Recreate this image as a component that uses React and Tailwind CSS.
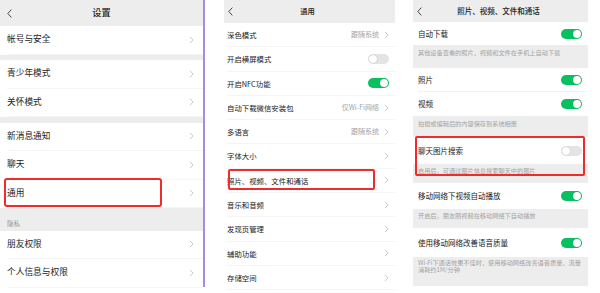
import React from 'react'
import clsx from 'clsx'

function Chevron() {
    return (
        <svg width="5" height="8" viewBox="0 0 5 8" className="shrink-0">
            <path d="M1 0.8L4 4L1 7.2" fill="none" stroke="#c4c4c4" strokeWidth="0.9" />
        </svg>
    )
}

function Back({ size = 1 }) {
    return (
        <svg width={5 * size} height={9 * size} viewBox="0 0 5 9" className="shrink-0">
            <path d="M4.3 0.6L0.8 4.5L4.3 8.4" fill="none" stroke="#333" strokeWidth="0.9" />
        </svg>
    )
}

function Toggle({ on }) {
    return (
        <div className={clsx(
            'w-[21px] h-[10px] rounded-full flex items-center px-[1px] shrink-0',
            on ? 'bg-[#07c160] justify-end' : 'bg-[#e4e4e4] justify-start'
        )}>
            <div className="w-[8px] h-[8px] rounded-full bg-white shadow-[0_0_1px_rgba(0,0,0,0.35)]" />
        </div>
    )
}

// ---------- panel 1: 设置 ----------
function SettingRow({ label, children }) {
    return (
        <div className="relative h-[28.5px] bg-white pl-[7px] flex">
            <div className="flex-1 flex items-center justify-between pr-[9px] border-b border-[#f4f4f4]">
                <span className="text-[8.7px] leading-none text-[#222]">{label}</span>
                <Chevron />
            </div>
            {children}
        </div>
    )
}

function Gap() {
    return <div className="h-[5.5px] bg-[#ededed]" />
}

function SettingsPanel() {
    return (
        <div className="w-[203px] h-full flex flex-col bg-white">
            <div className="h-[26px] bg-[#ededed] flex items-center px-[7px]">
                <Back />
                <span className="flex-1 text-center text-[9.2px] leading-none font-medium text-[#222]">设置</span>
                <span className="w-[5px]" />
            </div>
            <SettingRow label="帐号与安全" />
            <Gap />
            <SettingRow label="青少年模式" />
            <SettingRow label="关怀模式" />
            <Gap />
            <SettingRow label="新消息通知" />
            <SettingRow label="聊天" />
            <SettingRow label="通用">
                <div className="absolute left-[4px] top-[-1.5px] w-[158px] h-[29px] border-2 border-[#ef2b2b] rounded-[3px]" />
            </SettingRow>
            <div className="h-[22.5px] bg-[#ededed] flex items-end pl-[7px] pb-[4px]">
                <span className="text-[6.5px] leading-none text-[#9a9a9a]">隐私</span>
            </div>
            <SettingRow label="朋友权限" />
            <SettingRow label="个人信息与权限" />
        </div>
    )
}

// ---------- panel 2: 通用 ----------
function GeneralRow({ label, value, toggle, boxed }) {
    return (
        <div className="relative h-[24.3px] bg-white pl-[3px] flex">
            <div className="flex-1 flex items-center justify-between pr-[6px] border-b border-[#f4f4f4]">
                <span className="text-[7.4px] leading-none text-[#222]">{label}</span>
                {toggle === undefined ? (
                    <div className="flex items-center gap-[5px]">
                        {value && <span className="text-[7px] leading-none text-[#a3a3a3]">{value}</span>}
                        <Chevron />
                    </div>
                ) : (
                    <Toggle on={toggle} />
                )}
            </div>
            {boxed && (
                <div className="absolute left-[4px] top-0 w-[147px] h-[21.5px] border-2 border-[#ef2b2b] rounded-[2px]" />
            )}
        </div>
    )
}

function GeneralPanel() {
    return (
        <div className="w-[171px] h-full flex flex-col bg-white">
            <div className="h-[23px] bg-[#ededed] flex items-center px-[4px]">
                <Back />
                <span className="flex-1 text-center text-[7.3px] leading-none font-medium text-[#222] pr-[4px]">通用</span>
                <span className="w-[5px]" />
            </div>
            <GeneralRow label="深色模式" value="跟随系统" />
            <GeneralRow label="开启横屏模式" toggle={false} />
            <GeneralRow label="开启NFC功能" toggle={true} />
            <GeneralRow label="自动下载微信安装包" value="仅Wi-Fi网络" />
            <GeneralRow label="多语言" value="跟随系统" />
            <GeneralRow label="字体大小" />
            <GeneralRow label="照片、视频、文件和通话" boxed />
            <GeneralRow label="音乐和音频" />
            <GeneralRow label="发现页管理" />
            <GeneralRow label="辅助功能" />
            <GeneralRow label="存储空间" />
        </div>
    )
}

// ---------- panel 3: 照片、视频、文件和通话 ----------
function SwitchRow({ label, on, h, line }) {
    return (
        <div className={clsx('bg-white pl-[5px] flex', h)}>
            <div className={clsx('flex-1 flex items-center justify-between pr-[6px]', line && 'border-b border-[#f2f2f2]')}>
                <span className="text-[7.5px] leading-none text-[#222]">{label}</span>
                <Toggle on={on} />
            </div>
        </div>
    )
}

function Note({ h, pt = 'pt-[3.5px]', children }) {
    return (
        <div className={clsx('bg-[#ededed] px-[5px]', h, pt)}>
            <p className="text-[6.2px] leading-[7px] text-[#a3a3a3]">{children}</p>
        </div>
    )
}

function MediaPanel() {
    return (
        <div className="w-[175px] h-full flex flex-col bg-white">
            <div className="h-[22px] bg-[#ededed] flex items-center px-[4px]">
                <Back />
                <span className="flex-1 text-center text-[7.5px] leading-none font-medium text-[#222] pr-[4px]">照片、视频、文件和通话</span>
                <span className="w-[5px]" />
            </div>
            <SwitchRow label="自动下载" on h="h-[23px]" />
            <Note h="h-[23px]">其他设备查看的照片、视频和文件在手机上自动下载</Note>
            <SwitchRow label="照片" on h="h-[24px]" line />
            <SwitchRow label="视频" on h="h-[24px]" />
            <Note h="h-[21px]">拍摄或编辑后的内容保存到系统相册</Note>
            <div className="relative">
                <SwitchRow label="聊天图片搜索" on={false} h="h-[27px]" />
                <Note h="h-[19px]" pt="pt-[2.5px]">启用后，可通过图片信息搜索聊天中的图片</Note>
                <div className="absolute left-[2px] top-[-1px] w-[170px] h-[40px] border-2 border-[#ef2b2b] rounded-[2px]" />
            </div>
            <SwitchRow label="移动网络下视频自动播放" on h="h-[26px]" />
            <Note h="h-[19px]" pt="pt-[2.5px]">开启后，朋友圈视频在移动网络下自动播放</Note>
            <SwitchRow label="使用移动网络改善语音质量" on h="h-[29px]" />
            <Note h="h-[29px]" pt="pt-[2px]">Wi-Fi下通话效果不佳时，使用移动网络改善语音质量，流量消耗约1M/分钟</Note>
        </div>
    )
}

export default function App() {
    return (
        <div className="w-[600px] h-[293px] flex bg-white overflow-hidden font-['Noto_Sans_CJK_SC','Noto_Sans',sans-serif]">
            <SettingsPanel />
            <div className="w-[1.5px] h-[287px] bg-[#a48de0] shrink-0" />
            <div className="w-[19.5px] shrink-0" />
            <GeneralPanel />
            <div className="w-[18px] shrink-0" />
            <MediaPanel />
        </div>
    )
}
